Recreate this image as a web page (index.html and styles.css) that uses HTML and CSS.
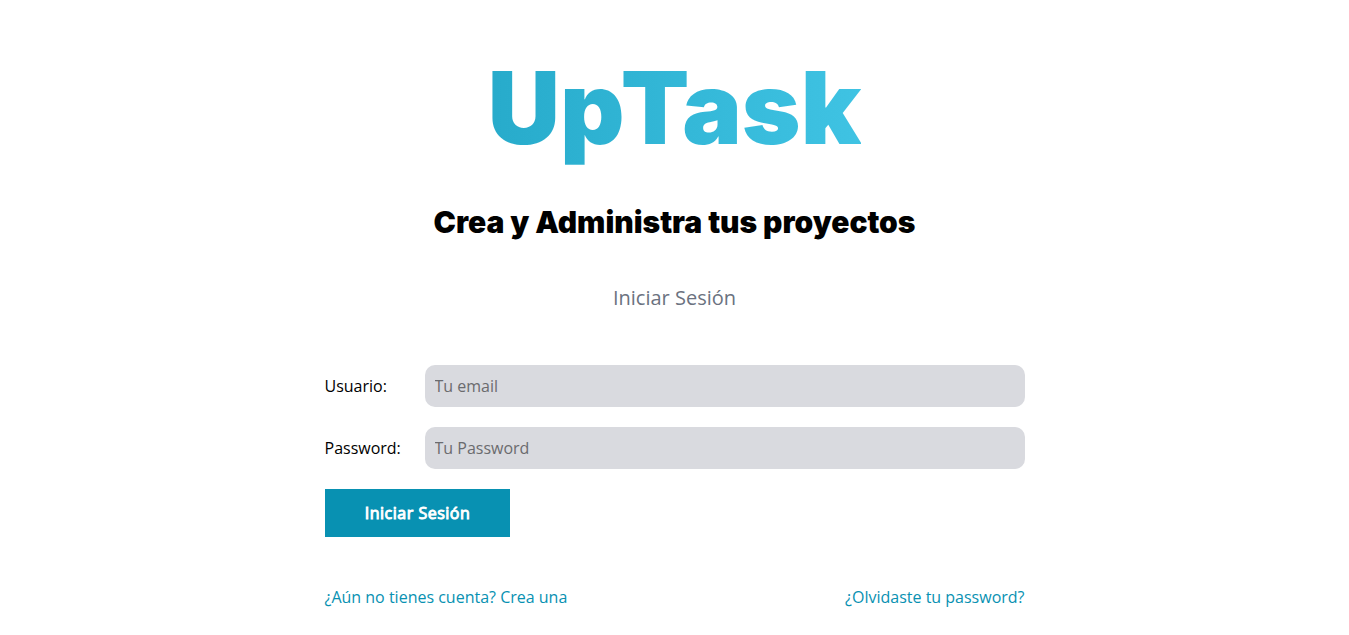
FILE: index.html
```html
<!DOCTYPE html>
<html lang="es">
<head>
<meta charset="utf-8">
<title>UpTask</title>
<link rel="stylesheet" href="styles.css">
</head>
<body>
<div class="contenedor">
<h1 class="uptask">U<span class="uptask-p">p</span>Task</h1>
<p class="tagline">Crea y Administra tus proyectos</p>
<div class="contenedor-sm">
<p class="descripcion-pagina">Iniciar Sesión</p>
<form class="formulario">
<div class="campo"><label for="email">Usuario:</label><input type="email" id="email" placeholder="Tu email"></div>
<div class="campo"><label for="password">Password:</label><input type="password" id="password" placeholder="Tu Password"></div>
<input type="submit" class="boton" value="Iniciar Sesión">
</form>
<div class="acciones"><a href="#">¿Aún no tienes cuenta? Crea una</a><a href="#">¿Olvidaste tu password?</a></div>
</div>
</div>
</body>
</html>
```
FILE: styles.css
```css
html { font-size: 62.5%; box-sizing: border-box; }
*, *::before, *::after { box-sizing: inherit; }
body { margin: 0; height: 635px; overflow: hidden; background: #fff; font-family: "Open Sans", sans-serif; font-size: 16px; color: #000; }
.contenedor { width: 700px; margin: 0 auto; padding-top: 47px; }
.uptask { margin: 0 auto; width: fit-content; font: 900 100px/121px Inter, sans-serif; background: linear-gradient(to right, #27abcb 0%, #3fc3e3 100%); -webkit-background-clip: text; background-clip: text; color: transparent; }
.uptask-p { letter-spacing: -3.6px; }
.tagline { margin: 36px 0 0; font: 900 30px/36px Inter, sans-serif; letter-spacing: -.03px; text-align: center; }
.descripcion-pagina { margin: 44px 0 0; font-size: 20px; line-height: 27px; text-align: center; color: #6b7280; }
.formulario { margin-top: 54px; }
.campo { display: flex; align-items: center; margin-bottom: 20px; }
.campo label { flex: 0 0 100px; }
.campo input { flex: 1; min-width: 0; height: 42px; padding: 10px; border: 0; border-radius: 10px; background: #d9dadf; font: 16px "Open Sans", sans-serif; }
.campo input::placeholder { color: #6b6b6e; }
.boton { display: block; width: 185px; height: 48px; padding: 0 0 0 1px; border: 0; background: #0891b2; color: #fff; font: 400 16px "Open Sans", sans-serif; letter-spacing: .5px; -webkit-text-stroke: .95px #fff; }
.acciones { display: flex; justify-content: space-between; margin-top: 49px; line-height: 22px; }
.acciones a { color: #0891b2; text-decoration: none; }
```
